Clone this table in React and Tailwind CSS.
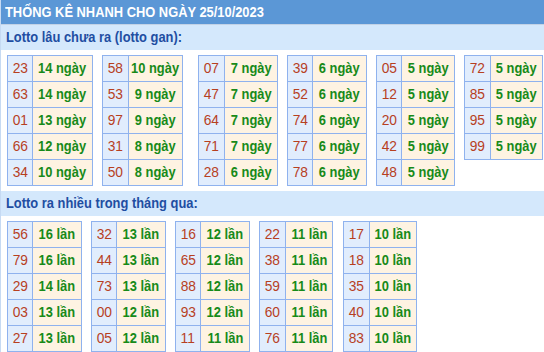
import React from 'react'

const ganTables = [
  { w1: 'w-[25px]', w2: 'w-[60px]', ml: 'ml-0', rows: [['23', '14 ngày'], ['63', '14 ngày'], ['01', '13 ngày'], ['66', '12 ngày'], ['34', '10 ngày']] },
  { w1: 'w-[26px]', w2: 'w-[54px]', ml: 'ml-[9px]', rows: [['58', '10 ngày'], ['53', '9 ngày'], ['97', '9 ngày'], ['31', '8 ngày'], ['50', '8 ngày']] },
  { w1: 'w-[26px]', w2: 'w-[53px]', ml: 'ml-[15px]', rows: [['07', '7 ngày'], ['47', '7 ngày'], ['64', '7 ngày'], ['71', '7 ngày'], ['28', '6 ngày']] },
  { w1: 'w-[25px]', w2: 'w-[54px]', ml: 'ml-[9px]', rows: [['39', '6 ngày'], ['52', '6 ngày'], ['74', '6 ngày'], ['77', '6 ngày'], ['78', '6 ngày']] },
  { w1: 'w-[25px]', w2: 'w-[53px]', ml: 'ml-[9px]', rows: [['05', '5 ngày'], ['12', '5 ngày'], ['20', '5 ngày'], ['42', '5 ngày'], ['48', '5 ngày']] },
  { w1: 'w-[26px]', w2: 'w-[52px]', ml: 'ml-[9px]', rows: [['72', '5 ngày'], ['85', '5 ngày'], ['95', '5 ngày'], ['99', '5 ngày']] },
]

const nhieuTables = [
  { w1: 'w-[25px]', w2: 'w-[49px]', ml: 'ml-0', rows: [['56', '16 lần'], ['79', '16 lần'], ['29', '14 lần'], ['03', '13 lần'], ['27', '13 lần']] },
  { w1: 'w-[25px]', w2: 'w-[49px]', ml: 'ml-[9px]', rows: [['32', '13 lần'], ['44', '13 lần'], ['73', '13 lần'], ['00', '12 lần'], ['05', '12 lần']] },
  { w1: 'w-[25px]', w2: 'w-[49px]', ml: 'ml-[9px]', rows: [['16', '12 lần'], ['65', '12 lần'], ['88', '12 lần'], ['93', '12 lần'], ['11', '11 lần']] },
  { w1: 'w-[26px]', w2: 'w-[47px]', ml: 'ml-[9px]', rows: [['22', '11 lần'], ['38', '11 lần'], ['59', '11 lần'], ['60', '11 lần'], ['76', '11 lần']] },
  { w1: 'w-[26px]', w2: 'w-[47px]', ml: 'ml-[10px]', rows: [['17', '10 lần'], ['18', '10 lần'], ['35', '10 lần'], ['40', '10 lần'], ['83', '10 lần']] },
]

function LottoTable({ t }) {
  return (
    <div className={`${t.ml} border-l border-t border-[#8fb2ee]`}>
      {t.rows.map(([num, val]) => (
        <div key={num} className="flex">
          <div className={`${t.w1} h-[26px] border-r border-b border-[#8fb2ee] bg-[#e1edfd] flex items-center justify-center text-[15px] text-[#b7401f]`}>
            <span className="inline-block scale-x-[0.92]">{num}</span>
          </div>
          <div className={`${t.w2} h-[26px] border-r border-b border-[#8fb2ee] bg-[#fef3e2] flex items-center justify-center text-[14px] font-bold text-[#178a19] whitespace-nowrap`}>
            <span className="inline-block scale-x-[0.92]">{val}</span>
          </div>
        </div>
      ))}
    </div>
  )
}

function SectionBar({ title }) {
  return (
    <div className="h-[25px] bg-[#d4e8fc] flex items-center pl-[5px] text-[14px] font-bold text-[#1f4ea2] whitespace-nowrap">
      <span className="inline-block origin-left scale-x-[0.92]">{title}</span>
    </div>
  )
}

export default function App() {
  return (
    <div className="w-[544px] h-[352px] overflow-hidden bg-white border-l border-[#c6daf3] font-['Liberation_Sans',Arial,sans-serif]">
      <div className="h-[25px] bg-[#5b97d6] border-b border-[#c2d2e6] flex items-center pl-[4px] text-[14px] font-bold text-white whitespace-nowrap">
        <span className="inline-block origin-left scale-x-[0.92]">THỐNG KÊ NHANH CHO NGÀY 25/10/2023</span>
      </div>
      <SectionBar title="Lotto lâu chưa ra (lotto gan):" />
      <div className="flex items-start pl-[6px] pt-[5px]">
        {ganTables.map((t, i) => <LottoTable key={i} t={t} />)}
      </div>
      <div className="mt-[5px]">
        <SectionBar title="Lotto ra nhiều trong tháng qua:" />
      </div>
      <div className="flex items-start pl-[6px] pt-[5px]">
        {nhieuTables.map((t, i) => <LottoTable key={i} t={t} />)}
      </div>
    </div>
  )
}
